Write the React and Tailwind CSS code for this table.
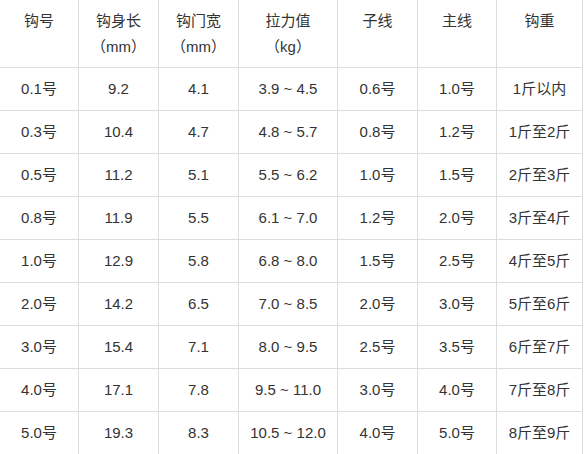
import React from 'react';

const headers = [
  ['钩号'],
  ['钩身长', '（mm）'],
  ['钩门宽', '（mm）'],
  ['拉力值', '（kg）'],
  ['子线'],
  ['主线'],
  ['钩重'],
];

const rows = [
  ['0.1号', '9.2', '4.1', '3.9 ~ 4.5', '0.6号', '1.0号', '1斤以内'],
  ['0.3号', '10.4', '4.7', '4.8 ~ 5.7', '0.8号', '1.2号', '1斤至2斤'],
  ['0.5号', '11.2', '5.1', '5.5 ~ 6.2', '1.0号', '1.5号', '2斤至3斤'],
  ['0.8号', '11.9', '5.5', '6.1 ~ 7.0', '1.2号', '2.0号', '3斤至4斤'],
  ['1.0号', '12.9', '5.8', '6.8 ~ 8.0', '1.5号', '2.5号', '4斤至5斤'],
  ['2.0号', '14.2', '6.5', '7.0 ~ 8.5', '2.0号', '3.0号', '5斤至6斤'],
  ['3.0号', '15.4', '7.1', '8.0 ~ 9.5', '2.5号', '3.5号', '6斤至7斤'],
  ['4.0号', '17.1', '7.8', '9.5 ~ 11.0', '3.0号', '4.0号', '7斤至8斤'],
  ['5.0号', '19.3', '8.3', '10.5 ~ 12.0', '4.0号', '5.0号', '8斤至9斤'],
];

const widths = ['w-[79px]', 'w-[80px]', 'w-[80px]', 'w-[99px]', 'w-[80px]', 'w-[79px]', 'w-[86px]'];

export default function App() {
  return (
    <div className="bg-white overflow-hidden">
      <div className="-mt-px -ml-px">
        <table
          className="table-fixed border-collapse w-[584px] text-[15px] leading-[26px] text-[#333]"
          style={{ fontFamily: '"Liberation Sans", "Noto Sans CJK SC", sans-serif' }}
        >
          <colgroup>
            {widths.map((w, i) => (
              <col key={i} className={w} />
            ))}
          </colgroup>
          <thead>
            <tr>
              {headers.map((h, i) => (
                <th key={i} className="border border-[#dddddd] px-2 pt-2 pb-[7px] align-top text-center font-normal">
                  {h.map((line, j) => (
                    <div key={j}>{line}</div>
                  ))}
                </th>
              ))}
            </tr>
          </thead>
          <tbody>
            {rows.map((r, i) => (
              <tr key={i}>
                {r.map((c, j) => (
                  <td key={j} className="border border-[#dddddd] px-1 py-2 text-center whitespace-nowrap">
                    {c}
                  </td>
                ))}
              </tr>
            ))}
          </tbody>
        </table>
      </div>
    </div>
  );
}
